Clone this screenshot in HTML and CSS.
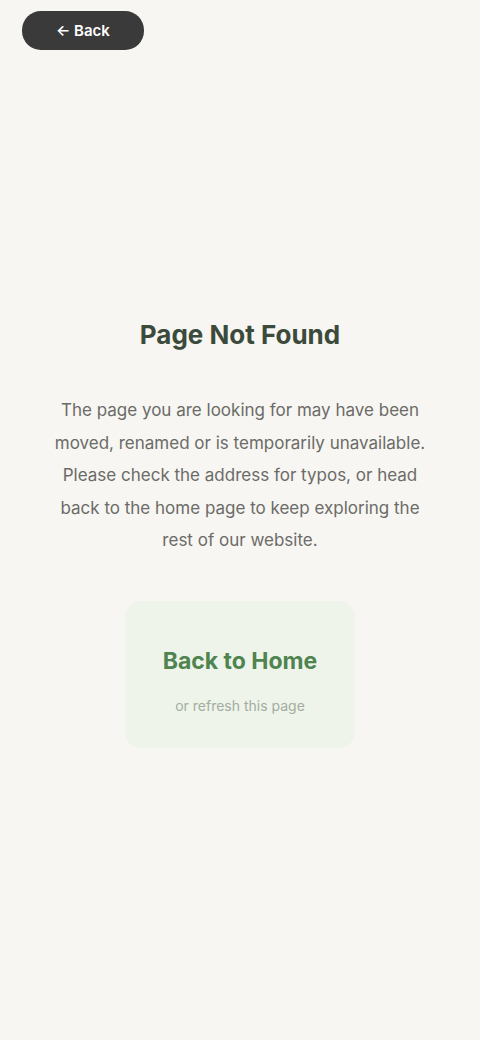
FILE: index.html
```html
<!DOCTYPE html>
<html lang="en">
<head>
    <meta charset="UTF-8">
    <meta name="viewport" content="width=device-width, initial-scale=1.0">
    <title>Page Not Found</title>
    <link rel="stylesheet" href="styles.css">
</head>
<body>

    <header class="top-bar">
        <button class="back-btn">&larr; Back</button>
    </header>

    <main class="content">
        <h1 class="title">Page Not Found</h1>
        <p class="message">
            The page you are looking for may have been moved, renamed or is temporarily unavailable. Please check the address for typos, or head back to the home page to keep exploring the rest of our website.
        </p>

        <div class="home-card">
            <div class="home-link">Back to Home</div>
            <div class="home-hint">or refresh this page</div>
        </div>
    </main>

</body>
</html>
```

FILE: styles.css
```css
body {
    margin: 0;
    font-family: 'Inter', 'Liberation Sans', sans-serif;
    background-color: #f7f6f2;
    color: #333;
    min-height: 1040px;
}
.top-bar {
    padding: 11px 22px;
}
.back-btn {
    background-color: #3a3a3a;
    color: #fff;
    border: none;
    border-radius: 19px;
    padding: 10px 34px;
    font-family: inherit;
    font-size: 15px;
    font-weight: 600;
    cursor: pointer;
}
.content {
    display: flex;
    flex-direction: column;
    align-items: center;
    text-align: center;
    padding: 258px 48px 0;
}
.title {
    margin: 0;
    font-size: 26px;
    font-weight: 700;
    color: #3b4a3b;
}
.message {
    margin: 44px 0 0;
    font-size: 17px;
    line-height: 32.5px;
    color: #6b6b68;
}
.home-card {
    margin-top: 44px;
    width: 230px;
    padding: 46px 0 34px;
    background-color: #eef4ea;
    border-radius: 16px;
    box-sizing: border-box;
}
.home-link {
    font-size: 23px;
    font-weight: 700;
    color: #4f8450;
}
.home-hint {
    margin-top: 22px;
    font-size: 14px;
    color: #a3ad9f;
}
```
